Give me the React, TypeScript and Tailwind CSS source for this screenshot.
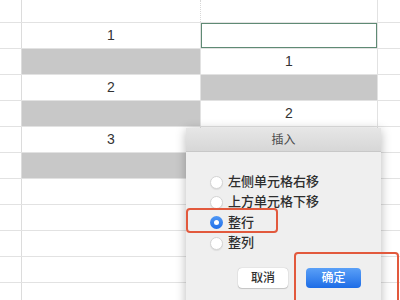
import React from "react";

type Cell = { text?: string; grey?: boolean; selected?: boolean };

const rows: [Cell, Cell][] = [
  [{ text: "1" }, { selected: true }],
  [{ grey: true }, { text: "1" }],
  [{ text: "2" }, { grey: true }],
  [{ grey: true }, { text: "2" }],
  [{ text: "3" }, {}],
  [{ grey: true }, {}],
  [{}, {}],
  [{}, {}],
  [{}, {}],
  [{}, {}],
  [{}, {}],
];

function GridCell({ c, w }: { c: Cell; w: string }) {
  return (
    <div className={`${w} h-full shrink-0 border-r border-[#e2e2e2] flex`}>
      {c.grey ? (
        <div className="w-full h-full bg-[#c8c8c8]" />
      ) : c.selected ? (
        <div className="w-full h-full border border-[#5f8a74]" />
      ) : (
        <div className="w-full h-full flex items-center justify-center text-[14px] text-[#333]">
          {c.text}
        </div>
      )}
    </div>
  );
}

function Radio({ checked }: { checked?: boolean }) {
  return checked ? (
    <div className="w-[13px] h-[13px] rounded-full bg-gradient-to-b from-[#4f97f5] to-[#1f6fe8] flex items-center justify-center shrink-0">
      <div className="w-[5px] h-[5px] rounded-full bg-white" />
    </div>
  ) : (
    <div className="w-[13px] h-[13px] rounded-full bg-white border border-[#d4d4d4] shadow-[0_1px_1px_rgba(0,0,0,0.08)] shrink-0" />
  );
}

export default function App() {
  const font = { fontFamily: "'Liberation Sans', 'Noto Sans CJK SC', sans-serif" };
  return (
    <div
      className="relative w-[400px] h-[300px] bg-white overflow-hidden"
      style={font}
    >
      {/* grid */}
      <div className="flex flex-col">
        <div className="flex h-[23px] border-b border-[#e2e2e2]">
          <div className="w-[22px] h-full border-r border-[#dcdcdc]" />
          <div className="w-[179px] h-full border-r border-dotted border-[#d8d8d8]" />
          <div className="w-[177px] h-full border-r border-[#e2e2e2]" />
          <div className="flex-1" />
        </div>
        {rows.map((r, i) => (
          <div key={i} className="flex h-[26px] border-b border-[#e2e2e2]">
            <div className="w-[22px] h-full shrink-0 border-r border-[#dcdcdc]" />
            <GridCell c={r[0]} w="w-[179px]" />
            <GridCell c={r[1]} w="w-[177px]" />
            <div className="flex-1" />
          </div>
        ))}
      </div>

      {/* dialog */}
      <div className="absolute left-[186px] top-[128px] w-[195px] h-[190px] flex flex-col shadow-[0_2px_10px_rgba(0,0,0,0.28)]">
        <div className="h-[24px] bg-gradient-to-b from-[#e6e6e6] to-[#d7d7d7] border-b border-[#c8c8c8] flex items-center justify-center text-[12px] text-[#4a4a4a]">
          插入
        </div>
        <div className="flex-1 bg-[#efefef] flex flex-col pl-[24px] pt-[20px] text-[13px] font-medium text-[#2e2e2e]">
          <div className="flex items-center gap-[5px] h-[20px]">
            <Radio />
            <span>左侧单元格右移</span>
          </div>
          <div className="flex items-center gap-[5px] h-[20px]">
            <Radio />
            <span>上方单元格下移</span>
          </div>
          <div className="flex items-center gap-[5px] h-[21px]">
            <Radio checked />
            <span>整行</span>
          </div>
          <div className="flex items-center gap-[5px] h-[20px]">
            <Radio />
            <span>整列</span>
          </div>
          <div className="flex gap-[18px] mt-[15px] pl-[28px]">
            <div className="w-[50px] h-[20px] bg-white rounded-[4px] shadow-[0_0_1px_rgba(0,0,0,0.35),0_1px_1px_rgba(0,0,0,0.15)] flex items-center justify-center text-[12px] text-[#333]">
              取消
            </div>
            <div className="w-[55px] h-[20px] rounded-[4px] bg-gradient-to-b from-[#5aa0f7] to-[#1c6ce6] flex items-center justify-center text-[12px] text-white">
              确定
            </div>
          </div>
        </div>
      </div>

      {/* red highlight boxes */}
      <div className="absolute left-[186px] top-[208px] w-[92px] h-[25px] border-2 border-[#e2593d] rounded-[4px]" />
      <div className="absolute left-[294px] top-[252px] w-[105px] h-[60px] border-2 border-[#e2593d] rounded-[4px]" />
    </div>
  );
}
